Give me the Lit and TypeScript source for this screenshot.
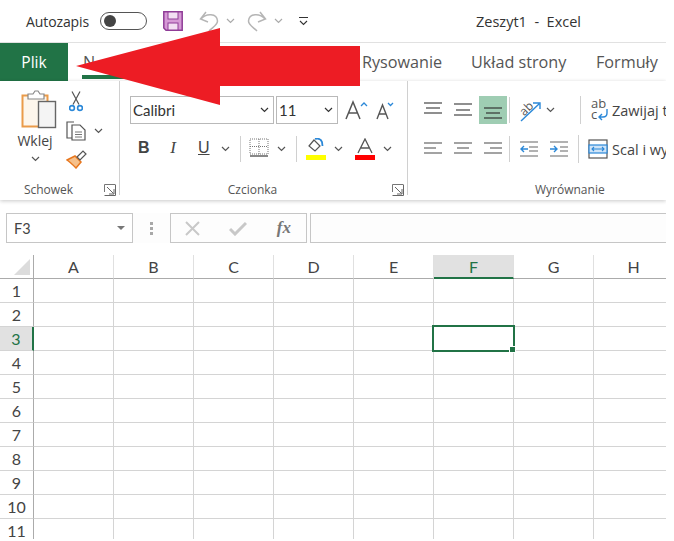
import { LitElement, html, css, svg } from "lit";
import { customElement } from "lit/decorators.js";

const chev = (c = "#555") => html`<svg class="chev" width="9" height="6" viewBox="0 0 9 6"><path d="M1 1l3.5 3.5L8 1" fill="none" stroke="${c}" stroke-width="1.2"/></svg>`;
const lines = (rows: [number, number, number][], c = "#666") => html`<svg width="20" height="20" viewBox="0 0 20 20">${rows.map(([y, a, b]) => svg`<path d="M${a} ${y}H${b}" stroke="${c}" stroke-width="1.2"/>`)}</svg>`;
const blue = "#2b88d8";

const COLS = ["A", "B", "C", "D", "E", "F", "G", "H"];
const ROWS = [1, 2, 3, 4, 5, 6, 7, 8, 9, 10, 11];

@customElement("app-root")
export class AppRoot extends LitElement {
  static styles = css`
    :host { display: block; width: 674px; height: 541px; background: #fff; font-family: "Open Sans", "Noto Sans", sans-serif; color: #444; overflow: hidden; }
    .frame { position: relative; width: 666px; height: 539px; overflow: hidden; background: #fff; }
    svg { display: block; flex: none; }

    .qat { height: 42px; border-bottom: 1px solid #e1e1e1; box-sizing: content-box; display: flex; align-items: center; font-size: 14px; color: #333; }
    .qat .auto { margin-left: 26px; width: 74px; letter-spacing: -0.1px; }
    .toggle { width: 47px; height: 18px; border: 1px solid #555; border-radius: 10px; box-sizing: border-box; display: flex; align-items: center; padding-left: 3px; margin-right: 16px; }
    .toggle i { width: 12px; height: 12px; border-radius: 50%; background: #444; display: block; }
    .qat .save { margin-right: 16px; }
    .qat .undo { margin-right: 7px; }
    .qat .gap { margin-right: 12px; }
    .qat .gap2 { margin-right: 16px; }
    .title { margin-left: 168px; white-space: pre; font-size: 14.5px; color: #333; }

    .tabs { height: 38px; display: flex; align-items: center; font-size: 16.2px; color: #555; }
    .plik { width: 68px; height: 38px; background: #217346; color: #fff; display: flex; align-items: center; justify-content: center; font-size: 15.5px; flex: none; }
    .tab { position: relative; height: 38px; display: flex; align-items: center; white-space: nowrap; flex: none; }
    .tab.home { margin-left: 14px; width: 153px; padding-left: 1px; box-sizing: border-box; }
    .tab.home span { display: block; font-size: 12px; }
    .tab.home span::first-letter { font-size: 16.2px; }
    .tab.home::after { content: ""; position: absolute; left: 0; right: 0; bottom: 2px; height: 4px; background: #217346; }
    .tab.ins { width: 127px; }
    .tab.rys { width: 109px; }
    .tab.uk { width: 125px; }

    .ribbon { height: 119px; display: flex; box-shadow: 0 1px 4px rgba(0, 0, 0, 0.22); position: relative; background: #fff; font-size: 13px; }
    .grp { position: relative; display: flex; flex-direction: column; flex: none; height: 114px; border-right: 1px solid #d0d0d0; box-sizing: border-box; }
    .grp.clip { width: 120px; }
    .grp.font { width: 288px; padding: 15px 0 0 10px; }
    .grp.align { width: 258px; padding: 15px 0 0 10px; border-right: 0; }
    .cap { position: absolute; left: 0; right: 22px; bottom: -3px; text-align: center; font-size: 12px; color: #555; line-height: 16px; }
    .cap.wyr { right: 0; text-align: left; padding-left: 127px; }
    .launch { position: absolute; right: 3px; bottom: -1px; }

    .clipbody { display: flex; padding: 9px 0 0 16px; }
    .paste { width: 38px; display: flex; flex-direction: column; align-items: center; font-size: 14px; color: #444; }
    .paste svg.clipicon { margin-left: 7px; }
    .paste span { line-height: 18px; margin-top: 3px; }
    .paste .chev { margin-top: 6px; }
    .tools { margin-left: 12px; display: flex; flex-direction: column; gap: 9px; padding-top: 1px; }
    .toolrow { display: flex; align-items: center; gap: 8px; }
    .scissors { margin-left: 3px; }

    .row { display: flex; align-items: center; }
    .combo { height: 28px; border: 1px solid #b9b9b9; box-sizing: border-box; display: flex; align-items: center; justify-content: space-between; padding: 0 4px 0 2px; font-family: "Lato", sans-serif; font-size: 15px; color: #333; }
    .combo.name { width: 144px; margin-right: 2px; }
    .combo.size { width: 62px; margin-right: 7px; }
    .row.two { margin-top: 13px; height: 24px; }
    .row.two .txt { margin-bottom: 2px; }
    .vsep { width: 1px; height: 26px; background: #d0d0d0; flex: none; }
    .b { font-family: "Liberation Sans", sans-serif; font-weight: 700; font-size: 16px; color: #444; width: 12px; }
    .i { font-family: "Liberation Serif", serif; font-style: italic; font-size: 17px; color: #444; width: 10px; text-align: center; }
    .ul { font-family: "Liberation Sans", sans-serif; font-size: 16px; color: #444; text-decoration: underline; width: 12px; }

    .acell { width: 30px; height: 28px; display: flex; align-items: center; justify-content: center; flex: none; }
    .acell.on { background: #9fcdb3; width: 28px; margin: 0 1px; }
    .wide { white-space: nowrap; font-size: 14.5px; color: #444; display: flex; align-items: center; gap: 4px; }
    .wide.wrap { gap: 3px; margin-left: 10px; }

    .fbar { height: 30px; margin: 13px 0 0 6px; display: flex; align-items: stretch; background: #fdfdfd; }
    .nbox { width: 127px; border: 1px solid #c6c6c6; box-sizing: border-box; display: flex; align-items: center; justify-content: space-between; padding: 0 7px; font-family: "Lato", sans-serif; font-size: 14.5px; color: #444; background: #fff; }
    .tri { width: 0; height: 0; border-left: 4px solid transparent; border-right: 4px solid transparent; border-top: 4px solid #777; }
    .dots { width: 37px; display: flex; flex-direction: column; align-items: center; justify-content: center; gap: 2px; }
    .dots i { display: block; width: 3px; height: 3px; background: #a8a8a8; }
    .fxbox { width: 137px; border: 1px solid #c6c6c6; box-sizing: border-box; display: flex; align-items: center; justify-content: space-between; padding: 0 15px 0 14px; background: #fdfdfd; }
    .fx { font-family: "Liberation Serif", serif; font-style: italic; font-weight: 700; font-size: 17px; color: #777; }
    .input { flex: 1; margin-left: 3px; border: 1px solid #c6c6c6; border-right: 0; background: #fdfdfd; }

    .sheet { margin-top: 12px; display: grid; grid-template-columns: 34px repeat(8, 80px); grid-auto-rows: 24px; font-family: "Lato", sans-serif; font-size: 16px; color: #444; }
    .sheet > div { box-sizing: border-box; border-right: 1px solid #d4d4d4; border-bottom: 1px solid #d4d4d4; position: relative; }
    .sheet .ch { display: flex; align-items: center; justify-content: center; border-bottom: 1px solid #ababab; border-right-color: #e0e0e0; }
    .sheet .ch.sel { background: #e1e1e1; color: #217346; border-bottom: 2px solid #217346; }
    .sheet .corner { border-bottom: 1px solid #ababab; border-right: 1px solid #ababab; }
    .corner::after { content: ""; position: absolute; right: 3px; bottom: 3px; border-style: solid; border-width: 0 0 16px 16px; border-color: transparent transparent #dcdcdc transparent; }
    .sheet .rh { display: flex; align-items: center; justify-content: center; border-right: 1px solid #ababab; }
    .sheet .rh.sel { background: #e1e1e1; color: #217346; border-right: 2px solid #217346; }
    .selbox { position: absolute; left: -2px; top: -2px; width: 83px; height: 27px; border: 2px solid #217346; box-sizing: border-box; z-index: 2; }
    .selbox::after { content: ""; position: absolute; right: -3px; bottom: -3px; width: 5px; height: 5px; background: #217346; border: 1px solid #fff; box-sizing: content-box; }

    .arrow { position: absolute; left: 0; top: 0; z-index: 5; pointer-events: none; }
  `;

  private launcher() {
    return html`<svg class="launch" width="12" height="12" viewBox="0 0 12 12"><path d="M.5 8V.5H11" fill="none" stroke="#777"/><path d="M3 3l6.5 6.5M10 5v5H5M.5 11.5H11.5V.5" fill="none" stroke="#666"/></svg>`;
  }

  private qat() {
    return html`<div class="qat">
      <span class="auto">Autozapis</span>
      <span class="toggle"><i></i></span>
      <svg class="save" width="20" height="20" viewBox="0 0 20 20"><path d="M.8.8H19.2V19.2H3L.8 17Z" fill="#d69ad6" stroke="#8f3d97" stroke-width="1.5"/><rect x="5" y="1" width="10" height="7" fill="#f3dff3" stroke="#8f3d97"/><rect x="5" y="12" width="10" height="7" fill="#f3dff3" stroke="#8f3d97"/></svg>
      <svg class="undo" width="20" height="22" viewBox="0 0 20 22"><path d="M7 2L1.500 9 9 12M2 9C7 3 18 3 18.500 11C18.500 15 14 17 10 21" fill="none" stroke="#b5b5b5" stroke-width="1.5"/></svg>
      <span class="gap">${chev("#aaa")}</span>
      <svg class="undo" width="20" height="22" viewBox="0 0 20 22"><path d="M13 2L18.500 9 11 12M18 9C13 3 2 3 1.500 11C1.500 15 6 17 10 21" fill="none" stroke="#b5b5b5" stroke-width="1.5"/></svg>
      <span class="gap2">${chev("#aaa")}</span>
      <svg width="9" height="9" viewBox="0 0 9 9"><path d="M0 .5H9" stroke="#333"/><path d="M1 4l3.5 3.5L8 4" fill="none" stroke="#333" stroke-width="1.1"/></svg>
      <span class="title">Zeszyt1  -  Excel</span>
    </div>`;
  }

  private tabs() {
    return html`<div class="tabs">
      <div class="plik">Plik</div>
      <div class="tab home"><span>Narzędzia główne</span></div>
      <div class="tab ins">Wstawianie</div>
      <div class="tab rys">Rysowanie</div>
      <div class="tab uk">Układ strony</div>
      <div class="tab">Formuły</div>
    </div>`;
  }

  private clipboard() {
    return html`<div class="grp clip">
      <div class="clipbody">
        <div class="paste">
          <svg class="clipicon" width="36" height="39" viewBox="0 0 36 39"><rect x="1.500" y="5.500" width="25" height="31" fill="#fdf6ec" stroke="#ea9b4a" stroke-width="2"/><path d="M7 9V4h5l2-3h3l2 3h4v5Z" fill="#fff" stroke="#888" stroke-width="1.2"/><rect x="17.500" y="11.500" width="17" height="26" fill="#f4f4f4" stroke="#666" stroke-width="1.4"/></svg>
          <span>Wklej</span>
          ${chev()}
        </div>
        <div class="tools">
          <svg class="scissors" width="14" height="21" viewBox="0 0 14 21"><path d="M3 .5l7 13M11 .5l-7 13" stroke="#555" stroke-width="1.2" fill="none"/><circle cx="3" cy="17" r="2.400" fill="none" stroke="${blue}" stroke-width="1.6"/><circle cx="11" cy="17" r="2.400" fill="none" stroke="${blue}" stroke-width="1.6"/></svg>
          <div class="toolrow">
            <svg width="20" height="20" viewBox="0 0 20 20"><path d="M6 17H1V1h7" fill="#fff" stroke="#555" stroke-width="1.2"/><path d="M6 4h8l5 5v10H6Z" fill="#fff" stroke="#555" stroke-width="1.2"/><path d="M9 11h7M9 13.500h7M9 16h7" stroke="#777"/></svg>
            ${chev()}
          </div>
          <svg width="21" height="19" viewBox="0 0 21 19"><path d="M1 10l8-4 6 6-5 6C7 15 4 12 1 10Z" fill="#f6c08a" stroke="#e8771e" stroke-width="1.5"/><path d="M11 7l6-6 3 3-6 6Z" fill="#fff" stroke="#555" stroke-width="1.2"/></svg>
        </div>
      </div>
      <div class="cap">Schowek</div>
      ${this.launcher()}
    </div>`;
  }

  private font() {
    return html`<div class="grp font">
      <div class="row">
        <div class="combo name"><span>Calibri</span>${chev("#333")}</div>
        <div class="combo size"><span>11</span>${chev("#333")}</div>
        <svg width="24" height="20" viewBox="0 0 24 20"><path d="M1 19L8 2l7 17M4 13h8" fill="none" stroke="#555" stroke-width="1.5"/><path d="M16 6l3-3 3 3" fill="none" stroke="${blue}" stroke-width="1.3"/></svg>
        <svg style="margin-left:6px" width="20" height="20" viewBox="0 0 20 20"><path d="M2 19L7.500 5 13 19M4 14h7" fill="none" stroke="#555" stroke-width="1.4"/><path d="M13 3l2.500 2.500L18 3" fill="none" stroke="${blue}" stroke-width="1.3"/></svg>
      </div>
      <div class="row two">
        <span class="b txt" style="margin-left:8px">B</span>
        <span class="i txt" style="margin-left:18px">I</span>
        <span class="ul txt" style="margin-left:20px">U</span>
        <span style="margin-left:11px">${chev()}</span>
        <span class="vsep" style="margin-left:10px"></span>
        <svg style="margin-left:8px;margin-bottom:4px" width="20" height="19" viewBox="0 0 20 19"><path d="M1 1H19V16H1ZM10 1V16M1 8.500H19" fill="none" stroke="#777" stroke-dasharray="1 1"/><path d="M1 18H19" stroke="#555" stroke-width="1.4"/></svg>
        <span style="margin-left:8px">${chev()}</span>
        <span class="vsep" style="margin-left:10px"></span>
        <svg style="margin-left:9px" width="20" height="22" viewBox="0 0 20 22"><path d="M8 2l6 6-5 5-6-5Z" fill="#fff" stroke="#555" stroke-width="1.2"/><path d="M9 1c3-1 6 0 7 3l.5 4" fill="none" stroke="${blue}" stroke-width="1.8"/><rect x="0" y="17" width="20" height="5" fill="#ffff00"/></svg>
        <span style="margin-left:8px">${chev()}</span>
        <svg style="margin-left:12px" width="20" height="22" viewBox="0 0 20 22"><path d="M3 15L10 1l7 14M6 10h8" fill="none" stroke="#555" stroke-width="1.3"/><rect x="0" y="17" width="20" height="5" fill="#ff0000"/></svg>
        <span style="margin-left:8px">${chev()}</span>
      </div>
      <div class="cap">Czcionka</div>
      ${this.launcher()}
    </div>`;
  }

  private alignment() {
    const ln = (a: number[]) => lines([[4, a[0], a[1]], [9, a[2], a[3]], [14, a[4], a[5]]]);
    return html`<div class="grp align">
      <div class="row">
        <div class="acell">${lines([[3, 1, 19], [8, 3, 17], [13, 1, 19]], "#444")}</div>
        <div class="acell">${lines([[4, 1, 19], [10, 3, 17], [15, 1, 19]], "#444")}</div>
        <div class="acell on">${lines([[8, 1, 19], [13, 3, 17], [18, 1, 19]], "#333")}</div>
        <span class="vsep" style="margin-left:1px"></span>
        <svg style="margin-left:9px" width="22" height="24" viewBox="0 0 22 24"><text x="0" y="14" transform="rotate(-45 8 10)" font-size="12" font-family="Open Sans" fill="#555">ab</text><path d="M2 23L20 6M14 5h7v6" fill="none" stroke="${blue}" stroke-width="1.4"/></svg>
        <span style="margin-left:5px">${chev()}</span>
        <span class="vsep" style="margin-left:25px;height:28px"></span>
        <span class="wide wrap">
          <svg width="18" height="22" viewBox="0 0 18 22"><text x="0" y="9" font-size="13" font-family="Open Sans" fill="#555">ab</text><text x="0" y="20" font-size="13" font-family="Open Sans" fill="#555">c</text><path d="M16 10v4c0 3-2 4-4 4H8M11 15l-3 3 3 3" fill="none" stroke="${blue}" stroke-width="1.4"/></svg>
          Zawijaj tekst
        </span>
      </div>
      <div class="row" style="margin-top:11px">
        <div class="acell">${ln([1, 19, 1, 13, 1, 19])}</div>
        <div class="acell">${ln([1, 19, 4, 16, 1, 19])}</div>
        <div class="acell">${ln([1, 19, 7, 19, 1, 19])}</div>
        <span class="vsep" style="margin-left:1px"></span>
        <svg style="margin-left:9px" width="20" height="20" viewBox="0 0 20 20"><path d="M1 3H19M10 8H19M10 12H19M1 17H19" stroke="#666" stroke-width="1.2"/><path d="M9 10H2M5 7l-3 3 3 3" fill="none" stroke="${blue}" stroke-width="1.4"/></svg>
        <svg style="margin-left:10px" width="20" height="20" viewBox="0 0 20 20"><path d="M1 3H19M11 8H19M11 12H19M1 17H19" stroke="#666" stroke-width="1.2"/><path d="M1 10H8M5 7l3 3-3 3" fill="none" stroke="${blue}" stroke-width="1.4"/></svg>
        <span class="vsep" style="margin-left:9px;height:28px"></span>
        <span class="wide" style="margin-left:9px">
          <svg width="20" height="20" viewBox="0 0 20 20"><rect x="1" y="1" width="18" height="18" fill="#fff" stroke="#555" stroke-width="1.2"/><rect x="1" y="6" width="18" height="8" fill="#cfe4f7" stroke="${blue}" stroke-width="1.2"/><path d="M4 10H16M6 8l-2 2 2 2M14 8l2 2-2 2" fill="none" stroke="${blue}" stroke-width="1.1"/></svg>
          Scal i wyśrodkuj
        </span>
      </div>
      <div class="cap wyr">Wyrównanie</div>
    </div>`;
  }

  private sheet() {
    return html`<div class="sheet">
      <div class="corner"></div>
      ${COLS.map((c) => html`<div class="ch ${c === "F" ? "sel" : ""}">${c}</div>`)}
      ${ROWS.map((r) => html`
        <div class="rh ${r === 3 ? "sel" : ""}">${r}</div>
        ${COLS.map((c) => html`<div>${c === "F" && r === 3 ? html`<span class="selbox"></span>` : ""}</div>`)}
      `)}
    </div>`;
  }

  render() {
    return html`<div class="frame">
      ${this.qat()}
      ${this.tabs()}
      <div class="ribbon">${this.clipboard()}${this.font()}${this.alignment()}</div>
      <div class="fbar">
        <div class="nbox"><span>F3</span><i class="tri"></i></div>
        <div class="dots"><i></i><i></i><i></i></div>
        <div class="fxbox">
          <svg width="15" height="15" viewBox="0 0 15 15"><path d="M1 1l13 13M14 1L1 14" stroke="#c8c8c8" stroke-width="2"/></svg>
          <svg width="18" height="15" viewBox="0 0 18 15"><path d="M1 8l5 5L17 2" fill="none" stroke="#c8c8c8" stroke-width="3"/></svg>
          <span class="fx">fx</span>
        </div>
        <div class="input"></div>
      </div>
      ${this.sheet()}
      <svg class="arrow" width="362" height="110" viewBox="0 0 362 110"><path d="M76 66L220 28V46H360V86H220V105Z" fill="#ed1c24"/></svg>
    </div>`;
  }
}
